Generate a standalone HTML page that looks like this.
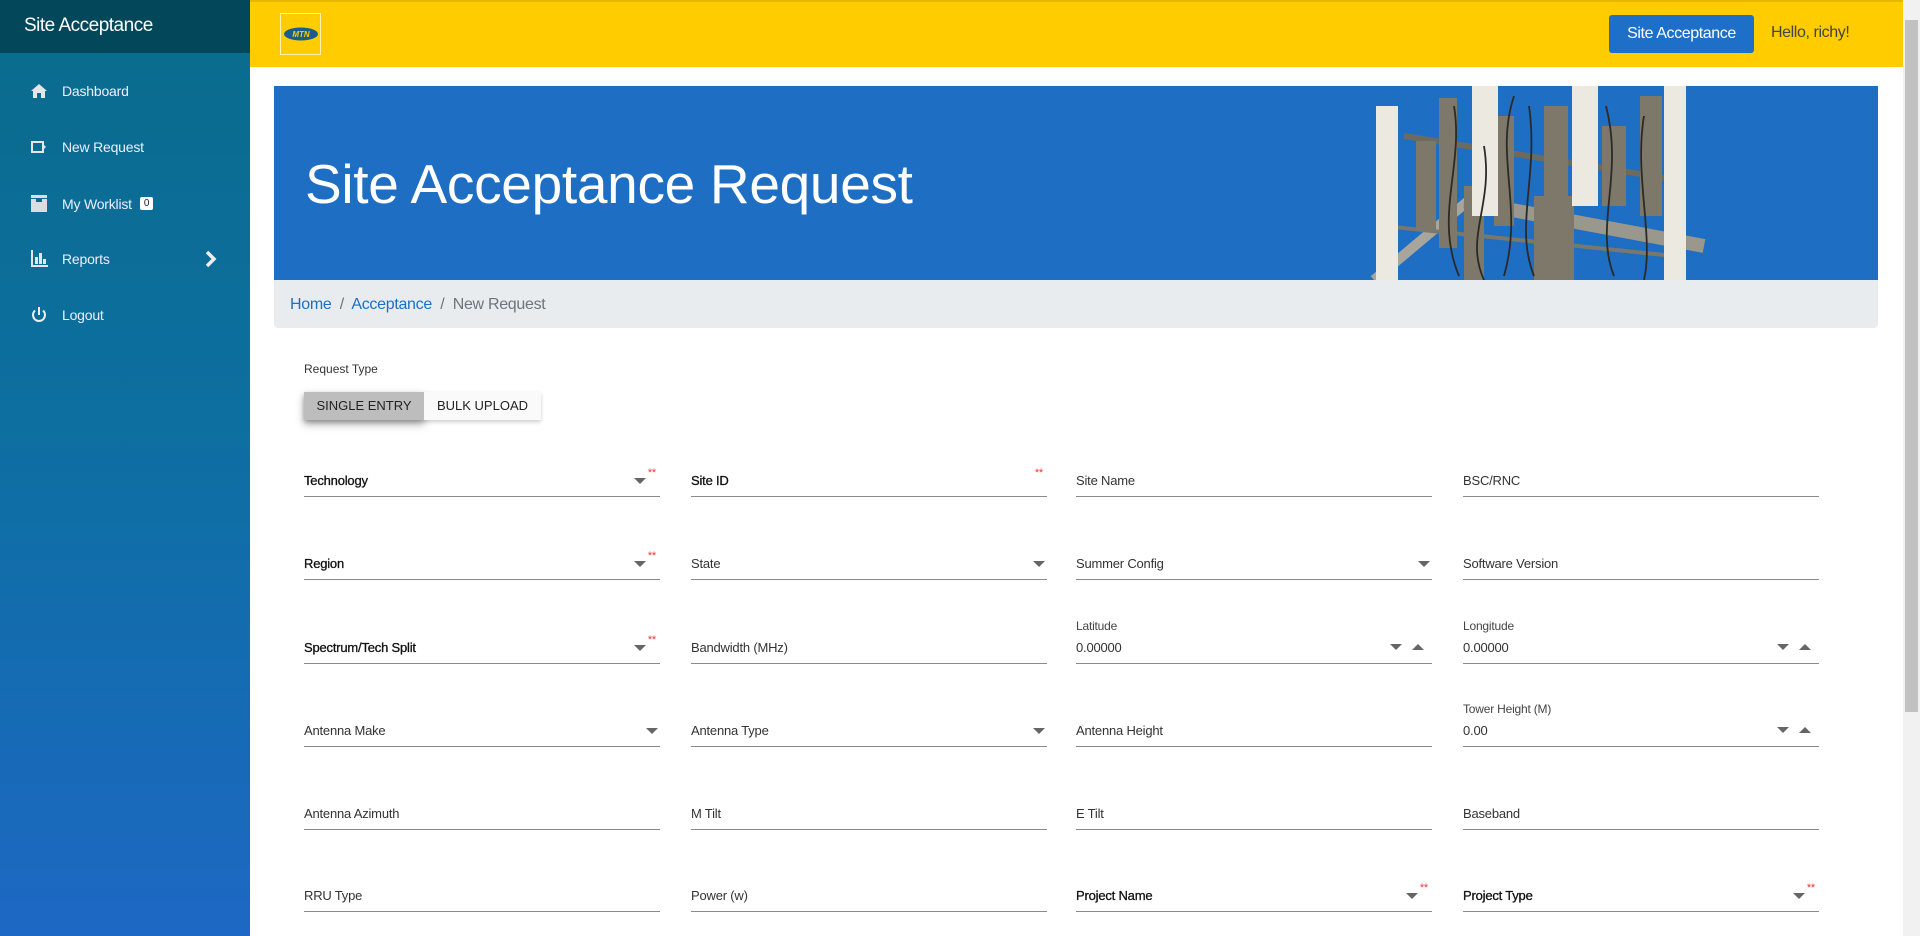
<!DOCTYPE html>
<html><head><meta charset="utf-8"><style>
*{box-sizing:border-box;margin:0;padding:0}
body{width:1920px;height:936px;overflow:hidden;background:#fff;font-family:"Liberation Sans",sans-serif;position:relative}
.sb{position:absolute;left:0;top:0;width:250px;height:936px;background:linear-gradient(#0a6b8c,#0d6fa0 45%,#1d68c4)}
.sbt{height:53px;background:#03475a;color:#fff;font-size:19px;padding:15px 0 0 24px;letter-spacing:-.5px}
.mi{position:absolute;left:30px;color:#eef;font-size:14px;display:flex;align-items:center;letter-spacing:-.2px}
.mi svg{margin-right:14px}
.hd{position:absolute;left:250px;top:0;width:1653px;height:67px;background:#ffcc00;border-top:2px solid #e6b800}
.logo{position:absolute;left:280px;top:13px;width:41px;height:42px;background:#ffcc00;border:1px solid #fff3b0;display:flex;align-items:center;justify-content:center}
.btn{position:absolute;left:1609px;top:15px;width:145px;height:38px;background:#1e6fc7;border-radius:3px;color:#fff;font-size:16px;text-align:center;line-height:38px;letter-spacing:-.4px}
.hello{position:absolute;left:1771px;top:24px;color:#444;font-size:16px;letter-spacing:-.4px}
.ban{position:absolute;left:274px;top:86px;width:1604px;height:194px;background:#1e6ec4;overflow:hidden}
.ban h1{position:absolute;left:31px;top:66px;color:#fff;font-weight:400;font-size:55px;letter-spacing:-.3px}
.bc{position:absolute;left:274px;top:280px;width:1604px;height:48px;background:#e9ecef;border-radius:0 0 4px 4px;font-size:16px;padding:16px 0 0 16px;color:#6c757d;letter-spacing:-.3px}
.bc a{color:#1e6ec4;text-decoration:none}
.f{position:absolute;width:356px;height:30px;border-bottom:1px solid #8a8a8a;font-size:13px;color:#333;letter-spacing:-.2px}
.f .l{position:absolute;left:0;bottom:8px}
.f.r .l{color:#111;font-size:13px;-webkit-text-stroke:.3px #111}
.f .ar{position:absolute;right:14px;bottom:12px;width:0;height:0;border-left:6px solid transparent;border-right:6px solid transparent;border-top:6px solid #666}
.f .st{position:absolute;right:4px;bottom:17px;color:#e33;font-size:11px}
.f .up{position:absolute;right:8px;bottom:13px;border-left:6px solid transparent;border-right:6px solid transparent;border-bottom:6px solid #666}
.f .dn2{position:absolute;right:30px;bottom:13px;border-left:6px solid transparent;border-right:6px solid transparent;border-top:6px solid #666}
.f .sm{position:absolute;left:0;bottom:30px;font-size:12px;color:#444}
.scr{position:absolute;left:1903px;top:0;width:17px;height:936px;background:#f1f1f1}
</style></head><body>
<div class="sb"><div class="sbt">Site Acceptance</div>
<div class="mi" style="top:83px"><svg width="18" height="16" viewBox="0 0 18 16"><path d="M9 1L1 8h2v7h4v-5h4v5h4V8h2z" fill="#e6e6e6"/></svg>Dashboard</div>
<div class="mi" style="top:139px"><svg width="18" height="14" viewBox="0 0 18 14"><path d="M1 1h13v4l2 2-2 2v4H1z M3 3v8h9V3z" fill="#e6e6e6" fill-rule="evenodd"/></svg>New Request</div>
<div class="mi" style="top:195px"><svg width="18" height="17" viewBox="0 0 18 17"><path d="M1 0h16v3H1zM1 4h16v13H1z" fill="#ddd"/><path d="M6 4h6v3H6z" fill="#0a6b8c"/></svg>My Worklist <span style="background:#fff;color:#222;font-size:10px;padding:1px 4px;margin-left:8px;border-radius:2px">0</span></div>
<div class="mi" style="top:250px"><svg width="18" height="17" viewBox="0 0 18 17"><path d="M1 0h2v15h15v2H1z M5 7h3v7H5z M9 3h3v11H9z M13 9h3v5h-3z" fill="#e6e6e6"/></svg>Reports<svg style="position:absolute;left:175px" width="12" height="18" viewBox="0 0 12 18"><path d="M2 2l7 7-7 7" stroke="#eee" stroke-width="3.5" fill="none"/></svg></div>
<div class="mi" style="top:306px"><svg width="18" height="18" viewBox="0 0 18 18"><path d="M5 4.5a6 6 0 1 0 8 0" stroke="#eee" stroke-width="2" fill="none"/><path d="M9 1v8" stroke="#eee" stroke-width="2"/></svg>Logout</div>
</div>
<div class="hd"></div>
<div class="logo"><svg width="36" height="14" viewBox="0 0 36 14"><ellipse cx="18" cy="7" rx="17" ry="6.5" fill="#1b5d8a"/><text x="18" y="10" font-size="8" font-weight="bold" font-style="italic" fill="#ffcc00" text-anchor="middle" font-family="Liberation Sans">MTN</text></svg></div>
<div class="btn">Site Acceptance</div>
<div class="hello">Hello, richy!</div>
<div class="ban"><h1>Site Acceptance Request</h1>
<svg style="position:absolute;left:1070px;top:0" width="380" height="194" viewBox="0 0 380 194">
<path d="M30 194L130 110" stroke="#a8a69c" stroke-width="10" fill="none"/>
<path d="M120 115L360 160" stroke="#9a978c" stroke-width="14" fill="none"/>
<path d="M60 50L340 95" stroke="#6c6b60" stroke-width="6"/>
<path d="M40 140L330 170" stroke="#7a786d" stroke-width="4"/>
<g fill="#7d7869"><rect x="72" y="55" width="20" height="90"/><rect x="95" y="12" width="18" height="150"/><rect x="150" y="30" width="20" height="110"/><rect x="200" y="20" width="24" height="100"/><rect x="258" y="40" width="24" height="80"/><rect x="296" y="10" width="22" height="120"/><rect x="190" y="110" width="40" height="84"/><rect x="120" y="100" width="20" height="94"/></g>
<g fill="#ece9e0"><rect x="32" y="20" width="22" height="174"/><rect x="128" y="0" width="26" height="130"/><rect x="228" y="0" width="26" height="120"/><rect x="320" y="0" width="22" height="194"/></g>
<g stroke="#2b2a25" stroke-width="1.8" fill="none"><path d="M110 20C120 80 90 130 115 190M170 10C150 70 180 120 160 190M185 20C195 90 170 140 190 190M262 20C280 90 250 140 270 190M300 30C290 90 310 150 300 194M140 60C150 120 120 150 140 194"/></g>
</svg></div>
<div class="bc"><a>Home</a> &nbsp;/&nbsp; <a>Acceptance</a> &nbsp;/&nbsp; New Request</div>
<div style="position:absolute;left:304px;top:362px;font-size:12px;color:#333">Request Type</div>
<div style="position:absolute;left:304px;top:392px;width:237px;height:28px;box-shadow:0 2px 4px rgba(0,0,0,.2);font-size:13px;display:flex">
<div style="width:120px;background:#bdbdbd;text-align:center;line-height:28px;color:#222;box-shadow:0 4px 8px rgba(0,0,0,.35)">SINGLE ENTRY</div>
<div style="width:117px;background:#fafafa;text-align:center;line-height:28px;color:#222">BULK UPLOAD</div></div>

<div class="f r" style="left:304px;top:467px"><span class="l">Technology</span><i class="ar"></i><span class="st">**</span></div>
<div class="f r" style="left:691px;top:467px"><span class="l">Site ID</span><span class="st">**</span></div>
<div class="f" style="left:1076px;top:467px"><span class="l">Site Name</span></div>
<div class="f" style="left:1463px;top:467px"><span class="l">BSC/RNC</span></div>

<div class="f r" style="left:304px;top:550px"><span class="l">Region</span><i class="ar"></i><span class="st">**</span></div>
<div class="f" style="left:691px;top:550px"><span class="l">State</span><i class="ar" style="right:2px"></i></div>
<div class="f" style="left:1076px;top:550px"><span class="l">Summer Config</span><i class="ar" style="right:2px"></i></div>
<div class="f" style="left:1463px;top:550px"><span class="l">Software Version</span></div>

<div class="f r" style="left:304px;top:634px"><span class="l">Spectrum/Tech Split</span><i class="ar"></i><span class="st">**</span></div>
<div class="f" style="left:691px;top:634px"><span class="l">Bandwidth (MHz)</span></div>
<div class="f" style="left:1076px;top:634px"><span class="sm">Latitude</span><span class="l">0.00000</span><i class="dn2"></i><i class="up"></i></div>
<div class="f" style="left:1463px;top:634px"><span class="sm">Longitude</span><span class="l">0.00000</span><i class="dn2"></i><i class="up"></i></div>

<div class="f" style="left:304px;top:717px"><span class="l">Antenna Make</span><i class="ar" style="right:2px"></i></div>
<div class="f" style="left:691px;top:717px"><span class="l">Antenna Type</span><i class="ar" style="right:2px"></i></div>
<div class="f" style="left:1076px;top:717px"><span class="l">Antenna Height</span></div>
<div class="f" style="left:1463px;top:717px"><span class="sm">Tower Height (M)</span><span class="l">0.00</span><i class="dn2"></i><i class="up"></i></div>

<div class="f" style="left:304px;top:800px"><span class="l">Antenna Azimuth</span></div>
<div class="f" style="left:691px;top:800px"><span class="l">M Tilt</span></div>
<div class="f" style="left:1076px;top:800px"><span class="l">E Tilt</span></div>
<div class="f" style="left:1463px;top:800px"><span class="l">Baseband</span></div>

<div class="f" style="left:304px;top:882px"><span class="l">RRU Type</span></div>
<div class="f" style="left:691px;top:882px"><span class="l">Power (w)</span></div>
<div class="f r" style="left:1076px;top:882px"><span class="l">Project Name</span><i class="ar"></i><span class="st">**</span></div>
<div class="f r" style="left:1463px;top:882px"><span class="l">Project Type</span><i class="ar"></i><span class="st">**</span></div>

<div class="scr"><div style="position:absolute;left:2px;top:20px;width:13px;height:692px;background:#c1c1c1"></div></div>
</body></html>
